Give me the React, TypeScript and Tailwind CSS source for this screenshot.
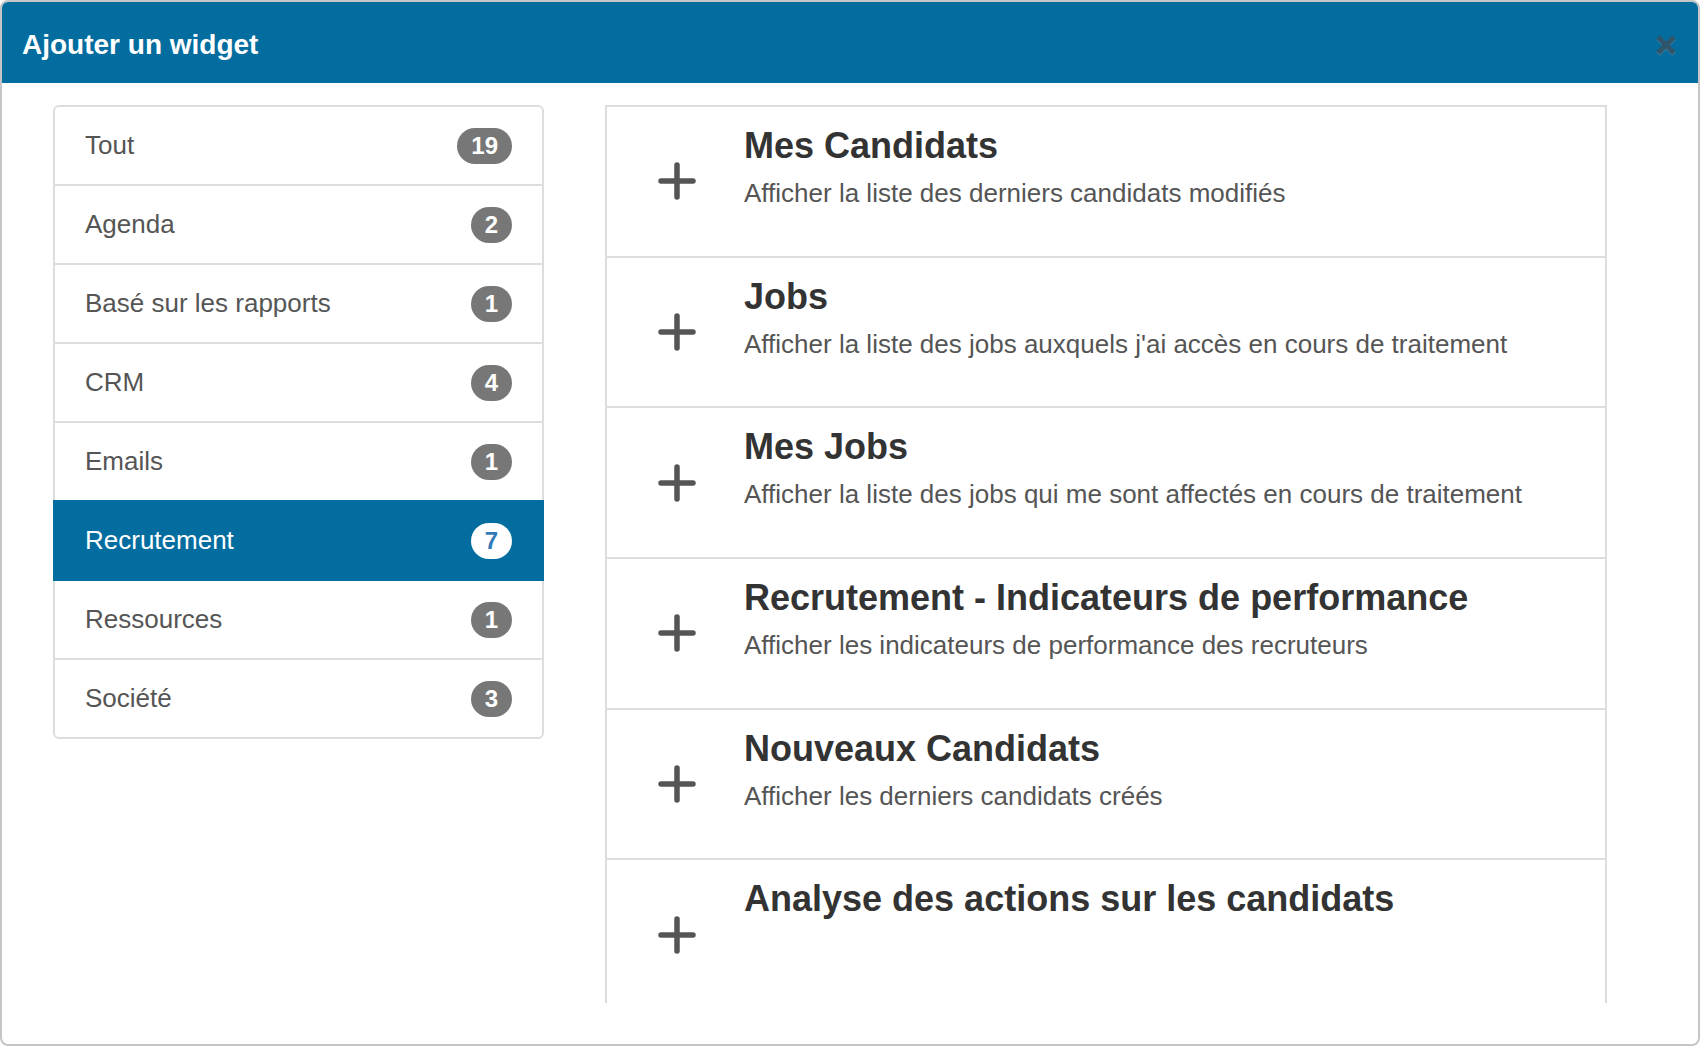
import React from 'react';

const CATEGORIES = [
  { name: 'Tout', count: 19 },
  { name: 'Agenda', count: 2 },
  { name: 'Basé sur les rapports', count: 1 },
  { name: 'CRM', count: 4 },
  { name: 'Emails', count: 1 },
  { name: 'Recrutement', count: 7, active: true },
  { name: 'Ressources', count: 1 },
  { name: 'Société', count: 3 },
];

const WIDGETS = [
  { title: 'Mes Candidats', desc: 'Afficher la liste des derniers candidats modifiés' },
  { title: 'Jobs', desc: "Afficher la liste des jobs auxquels j'ai accès en cours de traitement" },
  { title: 'Mes Jobs', desc: 'Afficher la liste des jobs qui me sont affectés en cours de traitement' },
  { title: 'Recrutement - Indicateurs de performance', desc: 'Afficher les indicateurs de performance des recruteurs' },
  { title: 'Nouveaux Candidats', desc: 'Afficher les derniers candidats créés' },
  { title: 'Analyse des actions sur les candidats', desc: '' },
];

function PlusIcon() {
  return (
    <svg width="38" height="38" viewBox="0 0 38 38" className="shrink-0">
      <path d="M3 19H35M19 3V35" stroke="#555555" strokeWidth="5.5" strokeLinecap="round" fill="none" />
    </svg>
  );
}

function CloseIcon() {
  return (
    <svg width="22" height="23" viewBox="0 0 22 23">
      <path d="M3 4L19 20M19 4L3 20" stroke="#4a7d9a" strokeWidth="5" fill="none" />
      <path d="M3 3L19 19M19 3L3 19" stroke="#2e556b" strokeWidth="5" fill="none" />
    </svg>
  );
}

export default function App() {
  return (
    <div className="w-[1700px] h-[1046px] bg-white font-['Liberation_Sans',Arial,sans-serif]">
      <div className="w-full h-full border-2 border-[#c6c6c6] rounded-[8px] overflow-hidden flex flex-col">
        {/* header */}
        <div className="h-[81px] shrink-0 bg-[#046d9f] flex items-center justify-between pl-[20px] pr-[21px] pt-[5px]">
          <h1 className="text-[28px] font-bold text-white leading-none">Ajouter un widget</h1>
          <CloseIcon />
        </div>

        {/* body */}
        <div className="flex items-start pt-[22px] pl-[51px]">
          <div className="w-[491px] border-2 border-[#dddddd] rounded-[6px] flex flex-col">
            {CATEGORIES.map((c, i) => {
              const last = i === CATEGORIES.length - 1;
              if (c.active) {
                return (
                  <div
                    key={c.name}
                    className="-mx-[2px] -mt-[2px] h-[81px] px-[32px] bg-[#046d9f] flex items-center justify-between"
                  >
                    <span className="text-[26px] text-white">{c.name}</span>
                    <span className="h-[36px] min-w-[41px] px-[14px] rounded-full bg-white text-[#337ab7] text-[24px] font-bold flex items-center justify-center">
                      {c.count}
                    </span>
                  </div>
                );
              }
              return (
                <div
                  key={c.name}
                  className={
                    last
                      ? 'h-[77px] px-[30px] flex items-center justify-between'
                      : 'h-[79px] px-[30px] border-b-2 border-[#dddddd] flex items-center justify-between'
                  }
                >
                  <span className="text-[26px] text-[#555555]">{c.name}</span>
                  <span className="h-[36px] min-w-[41px] px-[14px] rounded-full bg-[#777777] text-white text-[24px] font-bold flex items-center justify-center">
                    {c.count}
                  </span>
                </div>
              );
            })}
          </div>

          <div className="ml-[61px] w-[1002px] h-[898px] overflow-hidden border-x-2 border-t-2 border-[#dddddd]">
            {WIDGETS.map((w) => (
              <div key={w.title} className="h-[150.7px] shrink-0 border-b-2 border-[#dddddd] flex">
                <div className="self-center ml-[51px] flex">
                  <PlusIcon />
                </div>
                <div className="ml-[48px] pt-[19px]">
                  <div className="text-[36px] leading-[40px] font-bold text-[#333333]">{w.title}</div>
                  {w.desc && <div className="mt-[10px] text-[26px] leading-[34px] text-[#555555]">{w.desc}</div>}
                </div>
              </div>
            ))}
          </div>
        </div>
      </div>
    </div>
  );
}
